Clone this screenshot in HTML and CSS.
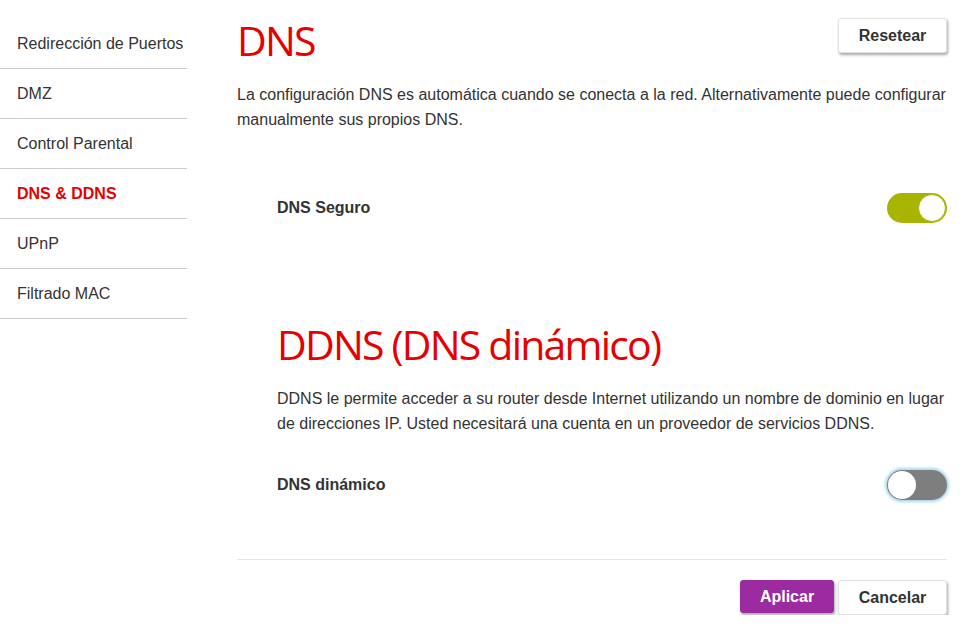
FILE: index.html
```html
<!DOCTYPE html>
<html lang="es">
  <head>
    <meta charset="UTF-8" />
    <meta name="viewport" content="width=device-width, initial-scale=1.0" />
    <title>DNS &amp; DDNS</title>
    <link rel="stylesheet" href="styles.css">
  </head>
  <body>
    <div class="page">
      <ul class="sidebar">
        <li><a href="#">Redirección de Puertos</a></li>
        <li><a href="#">DMZ</a></li>
        <li><a href="#">Control Parental</a></li>
        <li class="active"><a href="#">DNS &amp; DDNS</a></li>
        <li><a href="#">UPnP</a></li>
        <li><a href="#">Filtrado MAC</a></li>
      </ul>

      <div class="main">
        <div class="header">
          <h1>DNS</h1>
          <button type="button" class="btn">Resetear</button>
        </div>
        <p class="intro">
          La configuración DNS es automática cuando se conecta a la red. Alternativamente puede configurar
          manualmente sus propios DNS.
        </p>

        <div class="row secure">
          <span class="label">DNS Seguro</span>
          <span class="switch on"><span class="knob"></span></span>
        </div>

        <div class="section">
          <h1>DDNS (DNS dinámico)</h1>
          <p>
            DDNS le permite acceder a su router desde Internet utilizando un nombre de dominio en lugar
            de direcciones IP. Usted necesitará una cuenta en un proveedor de servicios DDNS.
          </p>
          <div class="row dynamic">
            <span class="label">DNS dinámico</span>
            <span class="switch off focus"><span class="knob"></span></span>
          </div>
        </div>

        <div class="actions">
          <button type="button" class="btn primary">Aplicar</button>
          <button type="button" class="btn">Cancelar</button>
        </div>
      </div>
    </div>
  </body>
</html>
```

FILE: styles.css
```css
body {
  font-family: Arial, "Liberation Sans", sans-serif;
  background-color: #fff;
  color: #333;
  margin: 0;
  padding: 0;
}
.page {
  display: flex;
  align-items: flex-start;
}
.sidebar {
  list-style: none;
  width: 187px;
  margin: 19px 0 0 0;
  padding: 0;
}
.sidebar li {
  height: 49px;
  border-bottom: 1px solid #ccc;
  display: flex;
  align-items: center;
  padding-left: 17px;
}
.sidebar a {
  color: #333;
  text-decoration: none;
  font-size: 16px;
}
.sidebar .active a {
  color: #e60000;
  font-weight: bold;
}
.main {
  flex: 1;
  margin: 0 30px 0 50px;
}
.header {
  display: flex;
  justify-content: space-between;
  align-items: flex-start;
  padding-top: 18px;
}
h1 {
  font-family: "Open Sans", sans-serif;
  font-weight: 400;
  font-size: 41px;
  line-height: 44px;
  letter-spacing: -1.8px;
  color: #e60000;
  margin: 0;
}
p {
  font-size: 16px;
  line-height: 25px;
  margin: 0;
}
.intro {
  margin-top: 20px;
}
.row {
  display: flex;
  justify-content: space-between;
  align-items: center;
  padding-left: 40px;
}
.row.secure {
  margin-top: 61px;
}
.label {
  font-weight: bold;
  font-size: 16px;
}
.switch {
  width: 60px;
  height: 30px;
  border-radius: 15px;
  display: flex;
  align-items: center;
  box-sizing: border-box;
  padding: 1px;
}
.switch.on {
  background-color: #a8b400;
  justify-content: flex-end;
}
.switch.off {
  background-color: #7e7e7e;
  justify-content: flex-start;
}
.switch.focus {
  box-shadow: 0 0 3px 2px #a9d8e8;
}
.knob {
  width: 28px;
  height: 28px;
  border-radius: 50%;
  background-color: #fff;
  box-sizing: border-box;
}
.switch.on .knob {
  border: 1px solid #a8b400;
}
.section {
  padding-left: 40px;
  margin-top: 99px;
}
.section .row {
  padding-left: 0;
}
.section p {
  margin-top: 20px;
}
.row.dynamic {
  margin-top: 34px;
}
.actions {
  display: flex;
  justify-content: flex-end;
  gap: 4px;
  border-top: 1px solid #e5e5e5;
  margin-top: 59px;
  padding-top: 20px;
}
.btn {
  font-family: Arial, "Liberation Sans", sans-serif;
  font-size: 16px;
  font-weight: bold;
  color: #333;
  background-color: #fff;
  border: 1px solid #e2e2e2;
  border-radius: 3px;
  box-shadow: 1px 2px 3px rgba(0, 0, 0, 0.35);
  height: 35px;
  padding: 0;
  width: 109px;
  cursor: pointer;
}
.btn.primary {
  background-color: #9c2aa0;
  border-color: #9c2aa0;
  color: #fff;
  height: 33px;
  width: 94px;
}
```
